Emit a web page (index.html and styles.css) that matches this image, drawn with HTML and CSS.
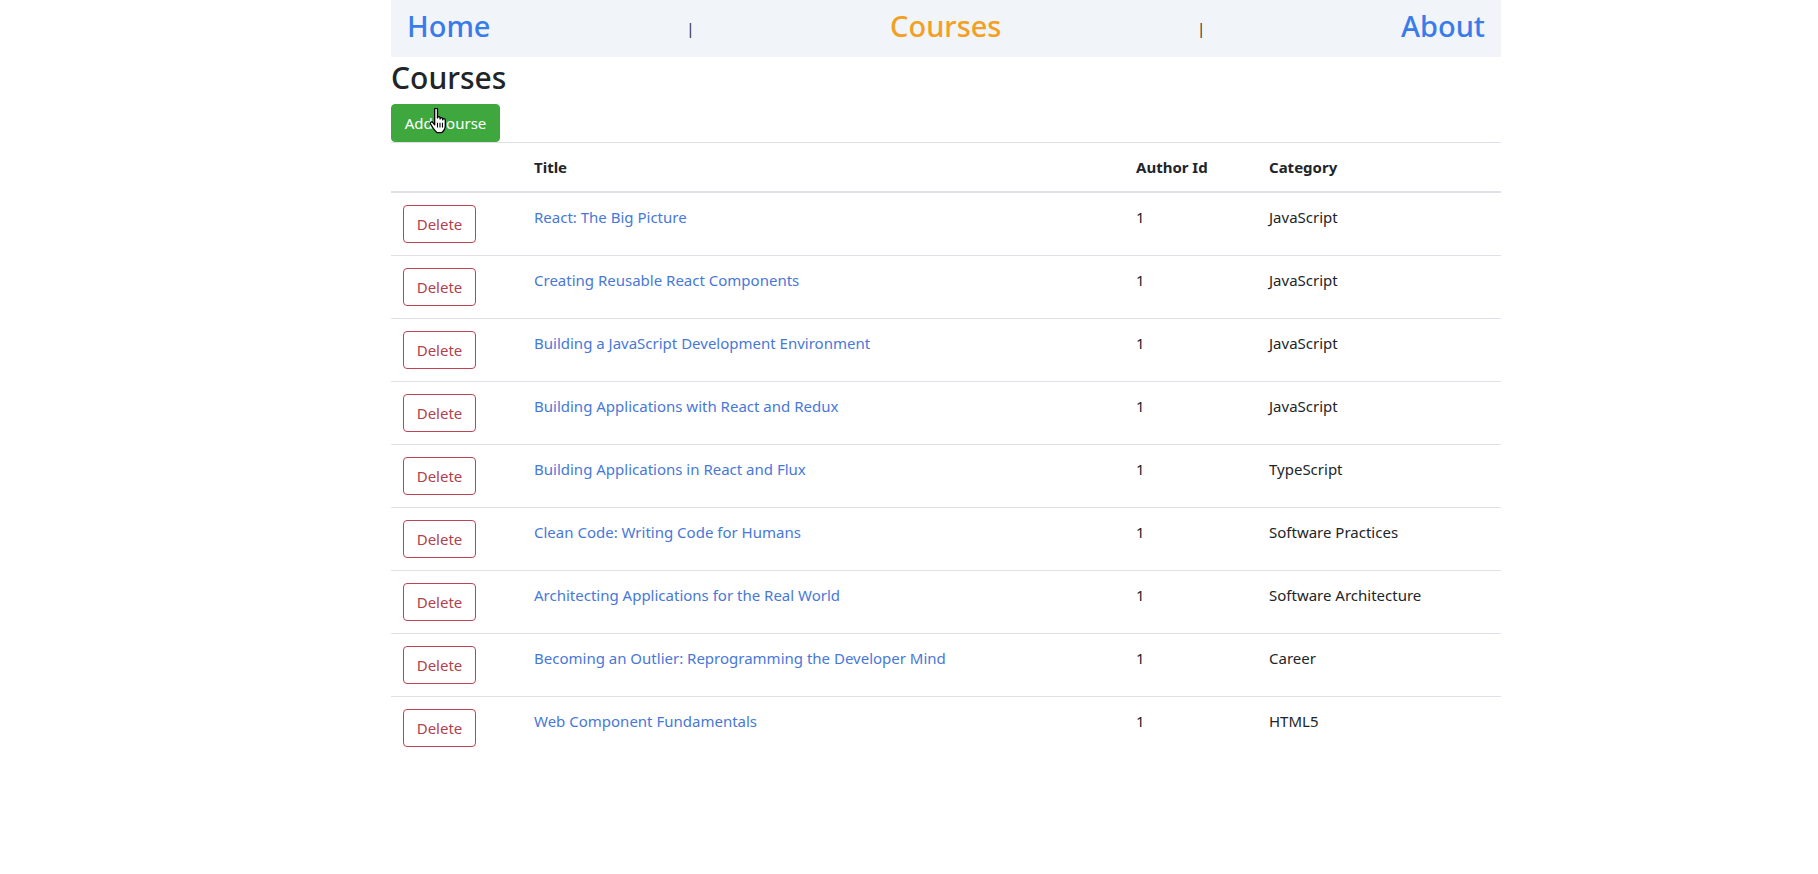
FILE: index.html
```html
<!DOCTYPE html>
<html lang="en">
<head>
<meta charset="utf-8">
<title>Courses</title>
<link rel="stylesheet" href="styles.css">
</head>
<body>
<div class="container">
  <nav class="nav">
    <a class="nav-link" href="#">Home</a>
    <span class="sep">|</span>
    <a class="nav-link active" href="#">Courses</a>
    <span class="sep">|</span>
    <a class="nav-link" href="#">About</a>
  </nav>
  <h2 class="page-title">Courses</h2>
  <div class="actions">
    <button class="btn btn-success">Add Course</button>
    <svg class="cursor" width="22" height="26" viewBox="0 0 20 24">
      <path d="M6 1.3c0-.8.6-1.3 1.3-1.3s1.3.5 1.3 1.3V9.2c0-.7.5-1.2 1.2-1.2s1.2.5 1.2 1.2v.9c0-.7.5-1.2 1.2-1.2s1.2.5 1.2 1.2v.9c0-.7.5-1.2 1.2-1.2s1.2.5 1.2 1.2v5.2c0 3-1.5 5.3-3.4 6.6H8.3c-1.5-1-2.8-2.7-4.2-5L2.2 14.8c-.4-.7-.2-1.5.5-1.8.6-.3 1.3-.1 1.7.5L6 15.6z" fill="#fff" stroke="#000" stroke-width="1.2" stroke-linejoin="round"/>
      <path d="M8.6 13.5v4.5M10.9 13.5v4.5M13.2 13.5v4.5" stroke="#000" stroke-width="1"/>
    </svg>
  </div>
  <table class="table">
    <colgroup>
      <col class="c-del"><col class="c-title"><col class="c-author"><col class="c-cat">
    </colgroup>
    <thead>
      <tr><th></th><th>Title</th><th>Author Id</th><th>Category</th></tr>
    </thead>
    <tbody>
      <tr><td><button class="btn btn-outline-danger">Delete</button></td><td><a href="#">React: The Big Picture</a></td><td>1</td><td>JavaScript</td></tr>
      <tr><td><button class="btn btn-outline-danger">Delete</button></td><td><a href="#">Creating Reusable React Components</a></td><td>1</td><td>JavaScript</td></tr>
      <tr><td><button class="btn btn-outline-danger">Delete</button></td><td><a href="#">Building a JavaScript Development Environment</a></td><td>1</td><td>JavaScript</td></tr>
      <tr><td><button class="btn btn-outline-danger">Delete</button></td><td><a href="#">Building Applications with React and Redux</a></td><td>1</td><td>JavaScript</td></tr>
      <tr><td><button class="btn btn-outline-danger">Delete</button></td><td><a href="#">Building Applications in React and Flux</a></td><td>1</td><td>TypeScript</td></tr>
      <tr><td><button class="btn btn-outline-danger">Delete</button></td><td><a href="#">Clean Code: Writing Code for Humans</a></td><td>1</td><td>Software Practices</td></tr>
      <tr><td><button class="btn btn-outline-danger">Delete</button></td><td><a href="#">Architecting Applications for the Real World</a></td><td>1</td><td>Software Architecture</td></tr>
      <tr><td><button class="btn btn-outline-danger">Delete</button></td><td><a href="#">Becoming an Outlier: Reprogramming the Developer Mind</a></td><td>1</td><td>Career</td></tr>
      <tr><td><button class="btn btn-outline-danger">Delete</button></td><td><a href="#">Web Component Fundamentals</a></td><td>1</td><td>HTML5</td></tr>
    </tbody>
  </table>
</div>
</body>
</html>
```
FILE: styles.css
```css
html, body {
  margin: 0;
  padding: 0;
  background: #fff;
}
body {
  font-family: "Noto Sans", "Open Sans", sans-serif;
  font-size: 15px;
  line-height: 24px;
  color: #212529;
}
.container {
  width: 1110px;
  margin-left: 391px;
}
.nav {
  display: flex;
  justify-content: space-between;
  align-items: baseline;
  height: 57px;
  padding: 4px 16px 0;
  background: #f1f4f9;
  box-sizing: border-box;
}
.nav-link {
  font-size: 29px;
  line-height: 44px;
  font-weight: 500;
  color: #3a7bea;
  text-decoration: none;
}
.nav-link.active {
  color: #f1a023;
}
.sep {
  position: relative;
  top: -3px;
  font-size: 15px;
  color: #333;
}
.page-title {
  margin: 0 0 8px;
  padding-top: 3px;
  font-size: 30px;
  line-height: 36px;
  font-weight: 500;
  color: #212529;
}
.actions {
  position: relative;
  height: 38px;
}
.btn {
  display: inline-block;
  box-sizing: border-box;
  height: 38px;
  padding: 0 12px;
  font-family: inherit;
  font-size: 15px;
  line-height: 36px;
  border: 1px solid transparent;
  border-radius: 4px;
  background: transparent;
  cursor: pointer;
}
.btn-success {
  width: 109px;
  background: #3ea83e;
  border-color: #3ea83e;
  color: #fff;
}
.btn-outline-danger {
  width: 73px;
  padding: 0;
  border-color: #bd4553;
  color: #b0424e;
}
.cursor {
  position: absolute;
  left: 37px;
  top: 4px;
}
.table {
  width: 100%;
  border-collapse: collapse;
  table-layout: fixed;
}
.c-del { width: 131px; }
.c-title { width: 602px; }
.c-author { width: 133px; }
.c-cat { width: 244px; }
.table th,
.table td {
  padding: 12px;
  text-align: left;
  vertical-align: top;
  line-height: 24px;
  border-top: 1px solid #dee2e6;
}
.table th {
  font-weight: 700;
  border-bottom: 2px solid #dee2e6;
}
.table td a {
  color: #4778d8;
  text-decoration: none;
}
.table td .btn {
  vertical-align: top;
}
```
